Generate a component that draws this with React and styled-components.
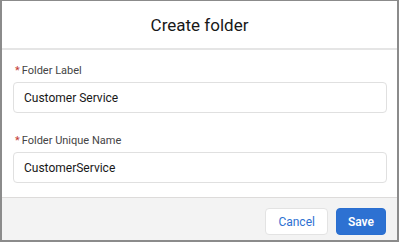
import React from 'react';
import styled, { createGlobalStyle } from 'styled-components';

const GlobalStyle = createGlobalStyle`
  html, body {
    margin: 0;
    padding: 0;
    background: #ffffff;
  }
  body {
    font-family: Roboto, "Noto Sans", "Liberation Sans", sans-serif;
  }
`;

const Frame = styled.div`
  box-sizing: border-box;
  width: 399px;
  height: 242px;
  border-style: solid;
  border-color: #8b8b8b;
  border-width: 1px 2px 2px 2px;
  display: flex;
  flex-direction: column;
  background: #ffffff;
`;

const Header = styled.div`
  height: 47px;
  border-bottom: 2px solid #e5e5e5;
  display: flex;
  align-items: center;
  justify-content: center;
`;

const Title = styled.h2`
  margin: 0;
  font-size: 17px;
  font-weight: 400;
  color: #181818;
`;

const Body = styled.div`
  flex: 1;
  padding: 12px 10px 0 11px;
  display: flex;
  flex-direction: column;
  gap: 19px;
`;

const Field = styled.div`
  display: flex;
  flex-direction: column;
  gap: 2px;
`;

const Label = styled.label`
  font-size: 11px;
  line-height: 18px;
  color: #444444;
  padding-left: 2px;
`;

const Required = styled.abbr`
  color: #c23934;
  text-decoration: none;
  margin-right: 2px;
`;

const Input = styled.input`
  box-sizing: border-box;
  height: 31px;
  width: 100%;
  border: 1px solid #e0e0e0;
  border-radius: 4px;
  padding: 0 10px;
  font-family: inherit;
  font-size: 12px;
  color: #181818;
  outline: none;
`;

const Footer = styled.div`
  height: 43px;
  box-sizing: border-box;
  border-top: 1px solid #dddbda;
  background: #f3f3f3;
  display: flex;
  justify-content: flex-end;
  align-items: flex-start;
  gap: 8px;
  padding: 10px 11px 0 0;
`;

const Button = styled.button`
  box-sizing: border-box;
  height: 27px;
  padding: 0 ${(p) => (p.$primary ? '11px' : '12px')};
  border-radius: 4px;
  font-family: inherit;
  font-size: 12px;
  border: 1px solid ${(p) => (p.$primary ? '#2a6fd0' : '#e3e3e3')};
  background: ${(p) => (p.$primary ? '#2d71d2' : '#ffffff')};
  color: ${(p) => (p.$primary ? '#ffffff' : '#2d71d2')};
  font-weight: ${(p) => (p.$primary ? 600 : 400)};
`;

export default function App() {
  return (
    <>
      <GlobalStyle />
      <Frame>
        <Header>
          <Title>Create folder</Title>
        </Header>
        <Body>
          <Field>
            <Label>
              <Required title="required">*</Required>Folder Label
            </Label>
            <Input defaultValue="Customer Service" />
          </Field>
          <Field>
            <Label>
              <Required title="required">*</Required>Folder Unique Name
            </Label>
            <Input defaultValue="CustomerService" />
          </Field>
        </Body>
        <Footer>
          <Button>Cancel</Button>
          <Button $primary>Save</Button>
        </Footer>
      </Frame>
    </>
  );
}
